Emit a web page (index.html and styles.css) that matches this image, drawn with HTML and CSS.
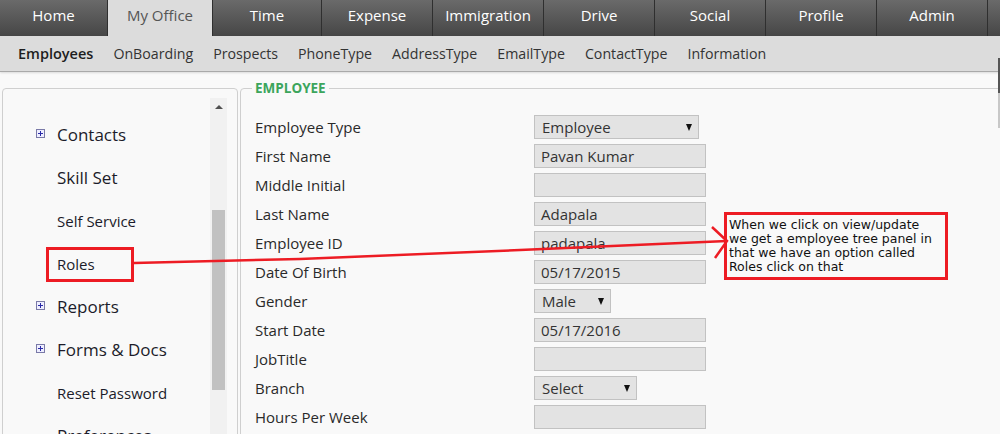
FILE: index.html
```html
<!DOCTYPE html>
<html>
<head>
<meta charset="utf-8">
<link rel="stylesheet" href="styles.css">
</head>
<body>
<nav class="topnav">
  <a class="tab">Home</a>
  <a class="tab active">My Office</a>
  <a class="tab">Time</a>
  <a class="tab">Expense</a>
  <a class="tab">Immigration</a>
  <a class="tab">Drive</a>
  <a class="tab">Social</a>
  <a class="tab">Profile</a>
  <a class="tab">Admin</a>
</nav>
<nav class="subnav">
  <a class="sub current">Employees</a>
  <a class="sub">OnBoarding</a>
  <a class="sub">Prospects</a>
  <a class="sub">PhoneType</a>
  <a class="sub">AddressType</a>
  <a class="sub">EmailType</a>
  <a class="sub">ContactType</a>
  <a class="sub">Information</a>
</nav>
<main class="main">
  <aside class="tree">
    <ul class="tree-list">
      <li class="node big"><span class="plus"></span>Contacts</li>
      <li class="node big"><span class="slot"></span>Skill Set</li>
      <li class="node"><span class="slot"></span>Self Service</li>
      <li class="node"><span class="slot"></span>Roles</li>
      <li class="node big"><span class="plus"></span>Reports</li>
      <li class="node big"><span class="plus"></span>Forms &amp; Docs</li>
      <li class="node"><span class="slot"></span>Reset Password</li>
      <li class="node big"><span class="slot"></span>Preferences</li>
    </ul>
    <div class="vscroll">
      <div class="arrow-up"></div>
      <div class="thumb"></div>
    </div>
  </aside>
  <fieldset class="emp">
    <legend>EMPLOYEE</legend>
    <div class="form">
      <label>Employee Type</label><div class="field sel w165">Employee<span class="tri"></span></div>
      <label>First Name</label><div class="field">Pavan Kumar</div>
      <label>Middle Initial</label><div class="field"></div>
      <label>Last Name</label><div class="field">Adapala</div>
      <label>Employee ID</label><div class="field">padapala</div>
      <label>Date Of Birth</label><div class="field">05/17/2015</div>
      <label>Gender</label><div class="field sel w77">Male<span class="tri"></span></div>
      <label>Start Date</label><div class="field">05/17/2016</div>
      <label>JobTitle</label><div class="field"></div>
      <label>Branch</label><div class="field sel w103">Select<span class="tri"></span></div>
      <label>Hours Per Week</label><div class="field"></div>
    </div>
  </fieldset>
</main>
<div class="pagebar"></div>
<svg class="marks" width="1000" height="434" viewBox="0 0 1000 434">
  <rect x="47.5" y="248.5" width="85" height="32" fill="none" stroke="#ed1c24" stroke-width="3"/>
  <rect x="725.5" y="213.5" width="221" height="65" fill="none" stroke="#ed1c24" stroke-width="3"/>
  <polyline points="134,263 300,259 520,250 727,241" fill="none" stroke="#ed1c24" stroke-width="2.5"/>
  <polyline points="712,227 727,241 715,258" fill="none" stroke="#ed1c24" stroke-width="2.5"/>
</svg>
<div class="note">When we click on view/update<br>we get a employee tree panel in<br>that we have an option called<br>Roles click on that</div>
</body>
</html>
```
FILE: styles.css
```css
html, body {
  margin: 0;
  padding: 0;
  overflow: hidden;
}
body {
  width: 1000px;
  height: 434px;
  background: #f9f9f9;
  font-family: "Open Sans", "Noto Sans", sans-serif;
  color: #333;
  position: relative;
}
.topnav {
  display: flex;
  height: 36px;
  background: linear-gradient(#6a6a6a, #464646);
}
.tab {
  box-sizing: border-box;
  flex: none;
  height: 36px;
  line-height: 31px;
  text-align: center;
  color: #fff;
  font-size: 15px;
  border-right: 1px solid #2f2f2f;
}
.tab:nth-child(1) { width: 108px; }
.tab:nth-child(2) { width: 105px; }
.tab:nth-child(3) { width: 109px; }
.tab:nth-child(n+4) { width: 111px; }
.tab.active {
  background: #dcdcdc;
  color: #555;
}
.subnav {
  display: flex;
  gap: 20px;
  height: 34px;
  padding-bottom: 1px;
  align-items: center;
  padding-left: 18px;
  background: #dcdcdc;
  border-bottom: 1px solid #a9a9a9;
  box-shadow: 0 1px 2px rgba(0,0,0,0.12);
}
.sub {
  font-size: 14.2px;
  color: #333;
}
.sub.current {
  font-size: 14.5px;
  font-weight: 600;
  color: #1e1e1e;
}
.main {
  display: flex;
  align-items: flex-start;
  padding: 7px 0 0 2px;
}
.tree {
  box-sizing: border-box;
  flex: none;
  width: 236px;
  height: 360px;
  margin-top: 9px;
  border: 1px solid #cfcfcf;
  border-radius: 4px;
  display: flex;
  overflow: hidden;
}
.tree-list {
  list-style: none;
  margin: 0;
  padding: 24px 0 0 33px;
  flex: 1;
}
.node {
  height: 43px;
  display: flex;
  align-items: center;
  font-size: 15px;
  color: #1c1c2a;
  white-space: nowrap;
}
.node.big { font-size: 17px; }
.slot {
  width: 21px;
  flex: none;
}
.plus {
  box-sizing: border-box;
  width: 9px;
  height: 9px;
  margin-right: 12px;
  flex: none;
  border: 1px solid #7a7aa8;
  background:
    linear-gradient(#2a2aa8, #2a2aa8) center / 5px 1px no-repeat,
    linear-gradient(#2a2aa8, #2a2aa8) center / 1px 5px no-repeat,
    #eef;
  position: relative;
  top: -1px;
}
.vscroll {
  flex: none;
  width: 17px;
  margin: 9px 10px 0 0;
  background: #f1f1f1;
  display: flex;
  flex-direction: column;
  align-items: center;
}
.arrow-up {
  width: 0;
  height: 0;
  margin-top: 7px;
  border-left: 4px solid transparent;
  border-right: 4px solid transparent;
  border-bottom: 4px solid #505050;
}
.thumb {
  width: 13px;
  height: 180px;
  margin-top: 101px;
  background: #c1c1c1;
}
.emp {
  flex: none;
  margin: 0 0 0 2px;
  padding: 18px 0 0 14px;
  width: 760px;
  height: 400px;
  border: 1px solid #cfcfcf;
  border-radius: 4px;
}
.emp legend {
  padding: 0 3px;
  margin-left: -3px;
  font-size: 13.5px;
  font-weight: 700;
  color: #3ca55c;
  line-height: 18px;
}
.form {
  display: grid;
  grid-template-columns: 279px auto;
  row-gap: 5px;
  align-items: center;
  justify-items: start;
}
.form label {
  font-size: 15px;
  color: #2a2a2a;
}
.field {
  box-sizing: border-box;
  width: 172px;
  height: 24px;
  line-height: 22px;
  padding-left: 6px;
  background: #e3e3e3;
  border: 1px solid #c2c2c2;
  font-size: 15px;
  color: #333;
  position: relative;
}
.sel { padding-left: 7px; }
.w165 { width: 165px; }
.w77 { width: 77px; }
.w103 { width: 103px; }
.tri {
  position: absolute;
  right: 6px;
  top: 8px;
  width: 0;
  height: 0;
  border-left: 3.5px solid transparent;
  border-right: 3.5px solid transparent;
  border-top: 7px solid #111;
}
.pagebar {
  position: absolute;
  right: 0;
  top: 58px;
  width: 2px;
  height: 35px;
  background: #555;
  box-shadow: 0 35px 0 #c8c8c8;
}
.marks {
  position: absolute;
  left: 0;
  top: 0;
  pointer-events: none;
}
.note {
  position: absolute;
  left: 729px;
  top: 218px;
  font-family: "DejaVu Sans", sans-serif;
  font-size: 12.5px;
  line-height: 14px;
  color: #111;
  white-space: nowrap;
}
```
